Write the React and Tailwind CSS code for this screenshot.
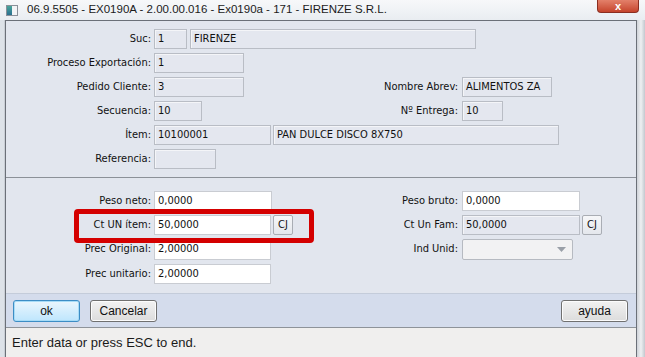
import React from 'react';

const Label = ({ children, className = '' }) => (
  <div className={`text-right pr-[3px] whitespace-nowrap ${className}`}>{children}</div>
);

const Field = ({ value = '', w, white = false }) => (
  <div
    className={`h-[20px] ${w} flex items-center px-[3px] border whitespace-nowrap overflow-hidden ${
      white ? 'bg-white border-[#c9ccd2]' : 'bg-[#e4e7ef] border-[#b9bdc5] shadow-[inset_1px_1px_0_#f4f5f8]'
    }`}
  >
    {value}
  </div>
);

const UnitBtn = () => (
  <div className="ml-[2px] h-[20px] w-[20px] flex items-center justify-center border border-[#a9adb4] rounded-[2px] bg-gradient-to-b from-[#f6f7f9] to-[#e4e7ec]">
    CJ
  </div>
);

const WinButton = ({ children, focus = false, className = '' }) => (
  <div
    className={`h-[22px] w-[67px] flex items-center justify-center rounded-[3px] border text-[12px] font-['Liberation_Sans',sans-serif] ${
      focus
        ? 'border-[#3c8dc5] bg-gradient-to-b from-[#eaf6fd] to-[#bee6fd] shadow-[inset_0_0_0_1px_#a7dcf7]'
        : 'border-[#707070] bg-gradient-to-b from-[#f2f2f2] to-[#dcdcdc] shadow-[inset_0_0_0_1px_#fcfcfc]'
    } ${className}`}
  >
    {children}
  </div>
);

export default function App() {
  return (
    <div className="relative w-[645px] h-[357px] overflow-hidden bg-[#dfe4ea] text-[#111] text-[11px] font-['DejaVu_Sans_Condensed','DejaVu_Sans',sans-serif]">
      {/* title bar */}
      <div className="h-[20px] flex items-center bg-gradient-to-b from-[#f7f8fa] to-[#e9edf1]">
        <div className="ml-[6px] w-[12px] h-[11px] border border-[#8a9099] bg-[#f2f4f6] flex">
          <div className="w-[5px] h-full bg-gradient-to-b from-[#4aa59a] to-[#2b6f8f]" />
        </div>
        <div className="ml-[9px] text-[11.5px] font-['Liberation_Sans',sans-serif] text-[#1b1b1b]">
          06.9.5505 - EX0190A - 2.00.00.016 - Ex0190a - 171 - FIRENZE S.R.L.
        </div>
        <div className="ml-auto mr-[6px] self-start w-[42px] h-[13px] rounded-b-[4px] border border-t-0 border-[#8b2e20] bg-gradient-to-b from-[#e3806a] to-[#c5432b] flex items-end justify-center">
          <span className="text-white text-[11px] leading-[11px] font-bold font-['Liberation_Sans',sans-serif]">x</span>
        </div>
      </div>

      <div className="flex h-[337px]">
        <div className="w-[5px] bg-[#dde2e8] border-r border-[#c9ced5]" />

        <div className="w-[632px] flex flex-col border-l border-r border-t border-[#6b7078] bg-[#e2e6ee]">
          {/* top section */}
          <div className="h-[157px] border-b border-[#8c9198] pt-[8px] flex flex-col gap-[4px]">
            <div className="flex items-center">
              <Label className="w-[148px]">Suc:</Label>
              <Field value="1" w="w-[33px]" />
              <div className="w-[3px]" />
              <Field value="FIRENZE" w="w-[286px]" />
            </div>
            <div className="flex items-center">
              <Label className="w-[148px]">Proceso Exportación:</Label>
              <Field value="1" w="w-[90px]" />
            </div>
            <div className="flex items-center">
              <div className="w-[456px] flex items-center">
                <Label className="w-[148px]">Pedido Cliente:</Label>
                <Field value="3" w="w-[90px]" />
                <Label className="flex-1 pr-[4px]">Nombre Abrev:</Label>
              </div>
              <Field value="ALIMENTOS ZA" w="w-[90px]" />
            </div>
            <div className="flex items-center">
              <div className="w-[456px] flex items-center">
                <Label className="w-[148px]">Secuencia:</Label>
                <Field value="10" w="w-[48px]" />
                <Label className="flex-1 pr-[4px]">Nº Entrega:</Label>
              </div>
              <Field value="10" w="w-[41px]" />
            </div>
            <div className="flex items-center">
              <Label className="w-[148px]">Ítem:</Label>
              <Field value="10100001" w="w-[117px]" />
              <div className="w-[2px]" />
              <Field value="PAN DULCE DISCO 8X750" w="w-[286px]" />
            </div>
            <div className="flex items-center">
              <Label className="w-[148px]">Referencia:</Label>
              <Field w="w-[62px]" />
            </div>
          </div>

          {/* bottom section */}
          <div className="h-[115px] pt-[13px] flex flex-col gap-[4px]">
            <div className="flex items-center">
              <div className="w-[456px] flex items-center">
                <Label className="w-[148px]">Peso neto:</Label>
                <Field value="0,0000" w="w-[118px]" white />
                <Label className="flex-1 pr-[4px]">Peso bruto:</Label>
              </div>
              <Field value="0,0000" w="w-[118px]" white />
            </div>
            <div className="flex items-center">
              <div className="w-[456px] flex items-center">
                <Label className="w-[148px]">Ct UN ítem:</Label>
                <Field value="50,0000" w="w-[117px]" white />
                <UnitBtn />
                <Label className="flex-1 pr-[4px]">Ct Un Fam:</Label>
              </div>
              <Field value="50,0000" w="w-[118px]" />
              <UnitBtn />
            </div>
            <div className="flex items-center">
              <div className="w-[456px] flex items-center">
                <Label className="w-[148px]">Prec Original:</Label>
                <Field value="2,00000" w="w-[117px]" white />
                <Label className="flex-1 pr-[4px]">Ind Unid:</Label>
              </div>
              <div className="h-[21px] w-[111px] flex items-center justify-end pr-[6px] border border-[#b6bac1] rounded-[2px] bg-[#f2f2f3]">
                <svg width="9" height="5" viewBox="0 0 9 5">
                  <path d="M0 0 L9 0 L4.5 5 Z" fill="#9aa0a8" />
                </svg>
              </div>
            </div>
            <div className="flex items-center">
              <Label className="w-[148px]">Prec unitario:</Label>
              <Field value="2,00000" w="w-[117px]" white />
            </div>
          </div>

          {/* button bar */}
          <div className="h-[35px] border-t border-[#c4ccda] border-b border-b-[#8e9399] bg-[#d4dcec] flex items-center px-[7px]">
            <WinButton focus>ok</WinButton>
            <WinButton className="ml-[10px]">Cancelar</WinButton>
            <WinButton className="ml-auto mr-[1px]">ayuda</WinButton>
          </div>

          {/* status bar */}
          <div className="flex-1 bg-[#f0efee] flex items-center pl-[6px] text-[13px] font-['Liberation_Sans',sans-serif] text-[#1a1a1a]">
            Enter data or press ESC to end.
          </div>
        </div>

        <div className="w-[8px] bg-gradient-to-r from-[#cfd3d9] via-[#eef0f2] to-[#c3c8cf]" />
      </div>

      {/* highlight frame */}
      <div className="absolute left-[74px] top-[209px] w-[240px] h-[34px] border-[5px] border-[#d40000] rounded-[4px]" />
    </div>
  );
}
